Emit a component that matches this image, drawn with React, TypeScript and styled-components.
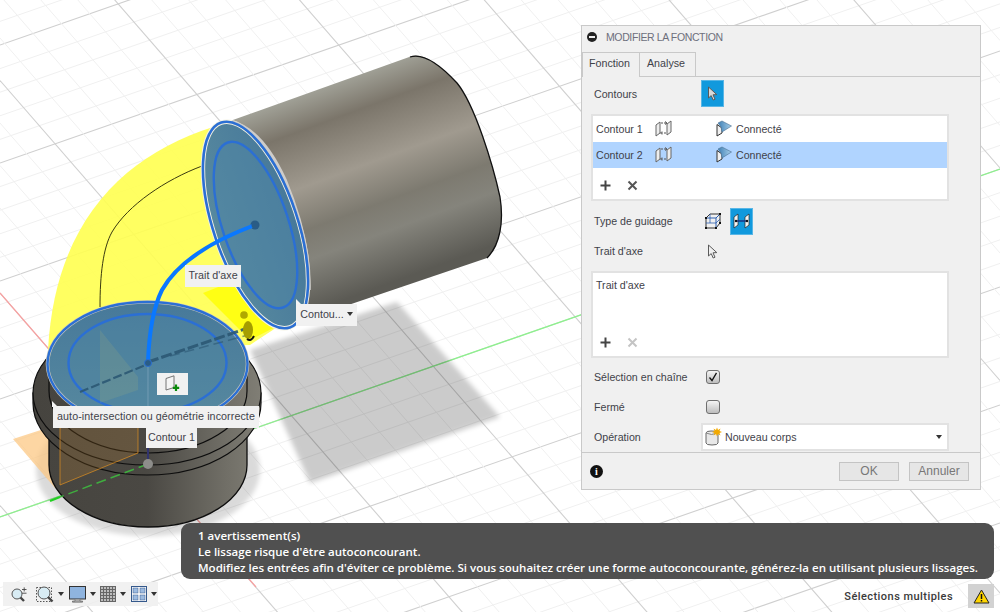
import React from "react";
import styled, { createGlobalStyle } from "styled-components";

const Global = createGlobalStyle`
  html, body { margin: 0; padding: 0; background: #fff; }
  body { font-family: "Liberation Sans", Arial, sans-serif; }
`;

const Page = styled.div`
  position: relative;
  width: 1000px;
  height: 612px;
  overflow: hidden;
  background: #fff;
  color: #3f4249;
  font-size: 11px;
`;

const Scene = styled.svg`
  position: absolute;
  inset: 0;
  display: block;
`;

const Chip = styled.div<{ $x: number; $y: number; $w: number; $h: number; $wide?: boolean }>`
  position: absolute;
  left: ${(p) => p.$x}px;
  top: ${(p) => p.$y}px;
  width: ${(p) => p.$w}px;
  height: ${(p) => p.$h}px;
  box-sizing: border-box;
  padding-bottom: 2px;
  background: #f1f1f1;
  display: flex;
  align-items: center;
  justify-content: center;
  white-space: nowrap;
  font-size: 10.7px;
  letter-spacing: ${(p) => (p.$wide ? "0.09px" : "0")};
  color: #3f4249;
  gap: 3px;
`;

const Pointer = styled.i<{ $x: number; $y: number }>`
  position: absolute;
  left: ${(p) => p.$x}px;
  top: ${(p) => p.$y}px;
  width: 0;
  height: 0;
  border-left: 6px solid #f4f4f4;
  border-top: 6px solid transparent;
`;

const Caret = styled.i<{ $color?: string }>`
  display: inline-block;
  width: 0;
  height: 0;
  border-left: 3px solid transparent;
  border-right: 3px solid transparent;
  border-top: 4px solid ${(p) => p.$color || "#333"};
`;

const Dialog = styled.div`
  position: absolute;
  left: 581px;
  top: 25px;
  width: 400px;
  height: 465px;
  box-sizing: border-box;
  border: 1px solid #c9c9c9;
  background: #f0f0f0;
  display: flex;
  flex-direction: column;
`;

const Header = styled.div`
  height: 26px;
  box-sizing: border-box;
  padding: 0 0 4px 5px;
  display: flex;
  align-items: center;
  gap: 9px;
  color: #6d6f7c;
  font-size: 10.5px;
  letter-spacing: -0.38px;
`;

const CollapseDot = styled.span`
  width: 10px;
  height: 10px;
  border-radius: 50%;
  background: #222;
  position: relative;
  &::after {
    content: "";
    position: absolute;
    left: 2px;
    right: 2px;
    top: 4px;
    height: 2px;
    background: #eee;
  }
`;

const Tabs = styled.div`
  height: 25px;
  display: flex;
  box-sizing: border-box;
  border-bottom: 1px solid #c9c9c9;
`;

const Tab = styled.div<{ $active?: boolean }>`
  box-sizing: border-box;
  height: ${(p) => (p.$active ? 25 : 24)}px;
  width: ${(p) => (p.$active ? 58 : 56)}px;
  padding: 0 3px 4px 0;
  display: flex;
  align-items: center;
  justify-content: center;
  border-top: 1px solid #c9c9c9;
  border-right: 1px solid #c9c9c9;
  border-left: ${(p) => (p.$active ? "1px solid #c9c9c9" : "none")};
  background: #f0f0f0;
  font-size: 10.7px;
  color: #3f4249;
`;

const Body = styled.div`
  flex: 1;
  padding: 3px 31px 0 9px;
  display: flex;
  flex-direction: column;
`;

const Row = styled.div<{ $h?: number; $mt?: number }>`
  height: ${(p) => p.$h ?? 28}px;
  margin-top: ${(p) => p.$mt ?? 0}px;
  display: grid;
  grid-template-columns: 110px 1fr;
  align-items: center;
  flex: none;
`;

const Label = styled.div`
  padding-left: 3px;
  font-size: 10.65px;
  color: #3f4249;
`;

const Controls = styled.div`
  display: flex;
  align-items: center;
  gap: 6px;
`;

const ToolBtn = styled.div<{ $on?: boolean }>`
  width: 23px;
  height: 27px;
  display: flex;
  align-items: center;
  justify-content: center;
  background: ${(p) => (p.$on ? "#1199dd" : "transparent")};
  border: ${(p) => (p.$on ? "1px solid #58b6e6" : "1px solid transparent")};
  box-sizing: border-box;
`;

const ListBox = styled.div<{ $mt: number }>`
  box-sizing: border-box;
  width: 358px;
  height: 87px;
  margin-top: ${(p) => p.$mt}px;
  background: #fff;
  border: 2px solid #e2e2e2;
  display: flex;
  flex-direction: column;
  flex: none;
`;

const ProfileRow = styled.div<{ $sel?: boolean }>`
  height: 26px;
  box-sizing: border-box;
  padding: 0 0 1px 3px;
  flex: none;
  display: grid;
  grid-template-columns: 59px 61px 20px 1fr;
  align-items: center;
  background: ${(p) => (p.$sel ? "#b0d4ff" : "#fff")};
  font-size: 10.65px;
  color: #3f4249;
`;

const ListFill = styled.div`
  flex: 1;
  min-height: 0;
`;

const ListText = styled.div`
  flex: 1;
  padding: 6px 0 0 3px;
  font-size: 10.65px;
  color: #3f4249;
`;

const ListActions = styled.div`
  height: 28px;
  display: flex;
  align-items: center;
  gap: 16px;
  padding-left: 7px;
  flex: none;
`;

const CheckBox = styled.div`
  margin-left: 5px;
  width: 12px;
  height: 12px;
  border: 1px solid #6f6f6f;
  border-radius: 3px;
  background: linear-gradient(#f4f4f4, #bdbdbd);
  display: flex;
  align-items: center;
  justify-content: center;
`;

const Select = styled.div`
  box-sizing: border-box;
  width: 248px;
  height: 28px;
  background: #fff;
  border: 2px solid #e2e2e2;
  display: flex;
  align-items: center;
  padding: 0 5px 0 2px;
  gap: 3px;
  font-size: 10.65px;
  color: #3f4249;
`;

const SelectText = styled.span`
  flex: 1;
`;

const Footer = styled.div`
  height: 36px;
  border-top: 1px solid #c9c9c9;
  display: flex;
  align-items: center;
  padding: 0 11px 0 8px;
  gap: 10px;
  flex: none;
`;

const InfoDot = styled.div`
  width: 13px;
  height: 13px;
  border-radius: 50%;
  background: #111;
  color: #fff;
  font: bold 10px "Liberation Serif", serif;
  display: flex;
  align-items: center;
  justify-content: center;
  margin-right: auto;
`;

const Button = styled.div`
  box-sizing: border-box;
  width: 60px;
  height: 19px;
  background: #e6e6e6;
  border: 1px solid #c4c4c4;
  color: #777;
  font-size: 12px;
  display: flex;
  align-items: center;
  justify-content: center;
`;

const Message = styled.div`
  position: absolute;
  left: 181px;
  top: 523px;
  width: 813px;
  height: 56px;
  box-sizing: border-box;
  background: #505050;
  border-radius: 9px;
  padding: 5px 0 0 17px;
  color: #fff;
  font-family: "Open Sans", sans-serif;
  font-weight: 600;
  font-size: 11.54px;
  line-height: 16px;
  white-space: nowrap;
`;

const Toolbar = styled.div`
  position: absolute;
  left: 3px;
  top: 582px;
  height: 24px;
  width: 155px;
  background: rgba(240, 240, 240, 0.92);
  display: flex;
  align-items: center;
  padding-left: 7px;
  box-sizing: border-box;
`;

const ToolItem = styled.div<{ $w: number }>`
  width: ${(p) => p.$w}px;
  display: flex;
  align-items: center;
  gap: 4px;
  flex: none;
`;

const Status = styled.div`
  position: absolute;
  right: 6px;
  top: 584px;
  height: 24px;
  display: flex;
  align-items: center;
  gap: 15px;
  font-family: Roboto, sans-serif;
  font-weight: 500;
  font-size: 11px;
  color: #3a3a3a;
  letter-spacing: 0.45px;
`;

const WarnChip = styled.div`
  width: 26px;
  height: 24px;
  background: #d2d2d2;
  display: flex;
  align-items: center;
  justify-content: center;
`;

const A_SLOPE = -0.348;
const B_SLOPE = 1.15;
const GridLines = () => {
  const lines: React.ReactElement[] = [];
  for (let i = -10; i < 60; i++) {
    const c = 45 + i * 23.6;
    const major = i % 5 === 0;
    lines.push(
      <line key={"a" + i} x1={0} y1={c} x2={1000} y2={c + A_SLOPE * 1000} stroke={major ? "#cfcfcf" : "#f0f0f0"} strokeWidth={major ? 1.1 : 1} />
    );
  }
  for (let i = -60; i < 15; i++) {
    const c = 293 + i * 42.5;
    const major = i % 5 === 0;
    lines.push(
      <line key={"b" + i} x1={0} y1={c} x2={1000} y2={c + B_SLOPE * 1000} stroke={major ? "#cfcfcf" : "#f0f0f0"} strokeWidth={major ? 1.1 : 1} />
    );
  }
  return <g>{lines}</g>;
};

const Model = () => (
  <Scene width={1000} height={612} viewBox="0 0 1000 612">
    <defs>
      <linearGradient id="cyl" gradientUnits="userSpaceOnUse" x1="322" y1="88" x2="393" y2="282">
        <stop offset="0" stopColor="#a0a096" />
        <stop offset="0.16" stopColor="#7b756a" />
        <stop offset="0.42" stopColor="#a09a8f" />
        <stop offset="0.62" stopColor="#7d7a70" />
        <stop offset="0.76" stopColor="#85847c" />
        <stop offset="1" stopColor="#5b5a54" />
      </linearGradient>
      <linearGradient id="base" gradientUnits="userSpaceOnUse" x1="33" y1="0" x2="261" y2="0">
        <stop offset="0" stopColor="#46443f" />
        <stop offset="0.5" stopColor="#4a4843" />
        <stop offset="0.85" stopColor="#716f67" />
        <stop offset="1" stopColor="#807e75" />
      </linearGradient>
      <linearGradient id="disk" x1="0" y1="0" x2="0" y2="1">
        <stop offset="0" stopColor="#47799a" />
        <stop offset="1" stopColor="#57899f" />
      </linearGradient>
      <filter id="soft" x="-10%" y="-10%" width="120%" height="120%">
        <feGaussianBlur stdDeviation="2.5" />
      </filter>
    </defs>

    <GridLines />
    <line x1="0" y1="517" x2="1000" y2="169" stroke="#8ef08e" strokeWidth="1.3" />
    <line x1="0" y1="293" x2="256" y2="587" stroke="#f7a0a0" strokeWidth="1.2" />

    <polygon points="397,302 500,417 310,483 250,350" fill="#000" opacity="0.2" filter="url(#soft)" />

    <path d="M213,127 C125,155 55,220 48,350 L250,345 L285,322 L240,190 Z" fill="#ffff50" fillOpacity="0.9" />
    <path d="M203,293 L250,340 L285,322 L262,270 Z" fill="#ffff14" />
    <path d="M202,166 C165,180 128,205 112,232 C103,248 100,275 100,307" fill="none" stroke="#3a3a10" strokeWidth="1" />

    <path d="M230,121 L412,56 C425,52 445,70 457,83 C475,105 493,165 500,197 C504,222 500,245 487,258 L310,318 Z" fill="url(#cyl)" />
    <path d="M410,57 C425,52 445,70 457,83 C475,105 493,165 500,197 C504,222 500,245 487,258" fill="none" stroke="#111" strokeWidth="1.3" />

    <ellipse cx="255.5" cy="225" rx="108" ry="42" transform="rotate(71.5 255.5 225)" fill="url(#disk)" stroke="#f4f2e2" strokeWidth="4.4" />
    <path d="M232,122 Q262,130 285,180 Q310,240 309,290" fill="none" stroke="#cfcdca" strokeWidth="3.5" />
    <ellipse cx="255.5" cy="225" rx="108" ry="42" transform="rotate(71.5 255.5 225)" fill="none" stroke="#2b6fd4" strokeWidth="2.6" />
    <ellipse cx="255.5" cy="225" rx="87" ry="33" transform="rotate(71.5 255.5 225)" fill="#4f86a3" fillOpacity="0.5" stroke="#2b6fd4" strokeWidth="2.4" />
    <circle cx="255" cy="225" r="4.5" fill="#2a5c86" />

    <ellipse cx="148" cy="470" rx="112" ry="66" fill="#000" opacity="0.14" filter="url(#soft)" />

    <polygon points="13,439 47,428 130,462 55,488" fill="#fcc884" opacity="0.75" />

    <path d="M49,420 V465 A99,62 0 0 0 247,465 V420 Z" fill="url(#base)" stroke="#0d0d0d" strokeWidth="1.3" />
    <path d="M33,393 V403 A114,72 0 0 0 261,403 V393 Z" fill="url(#base)" stroke="#0d0d0d" strokeWidth="1.2" />
    <ellipse cx="147" cy="393" rx="114" ry="72" fill="url(#base)" stroke="#0d0d0d" strokeWidth="1.2" />
    <path d="M49,364 V391 A99,62 0 0 0 247,391 V364 Z" fill="url(#base)" stroke="#0d0d0d" strokeWidth="1.2" />

    <polygon points="60,428 138,390 138,453 60,485" fill="#f0a030" fillOpacity="0.16" stroke="#e09020" strokeOpacity="0.7" strokeWidth="1" />
    <line x1="148" y1="364" x2="148" y2="462" stroke="#31346e" strokeWidth="2" />
    <line x1="148" y1="464" x2="60" y2="497" stroke="#3fae3f" strokeWidth="1.5" strokeDasharray="10 5" />
    <line x1="60" y1="497" x2="50" y2="501" stroke="#22d022" strokeWidth="2" />
    <circle cx="148" cy="464" r="5" fill="#8d8d8a" />

    <ellipse cx="147.5" cy="364" rx="100" ry="62" fill="url(#disk)" stroke="#c9c7ba" strokeWidth="3.6" />
    <ellipse cx="147.5" cy="364" rx="100" ry="62" fill="none" stroke="#2b6fd4" strokeWidth="2.4" />
    <ellipse cx="147.5" cy="363" rx="79" ry="49" fill="#4f86a3" fillOpacity="0.4" stroke="#2b6fd4" strokeWidth="2.4" />
    <polygon points="100,330 138,377 138,390 100,403" fill="#c0c070" opacity="0.14" />
    <line x1="148" y1="364" x2="148" y2="408" stroke="#6f9ab2" strokeWidth="1.4" opacity="0.8" />
    <line x1="80" y1="392" x2="148" y2="364" stroke="#2c5874" strokeWidth="2.2" strokeDasharray="9 3" opacity="0.9" />
    <line x1="148" y1="362" x2="248" y2="328" stroke="#2c5874" strokeWidth="3" strokeDasharray="11 3" opacity="0.9" />
    <line x1="170" y1="356" x2="248" y2="335" stroke="#2c5874" strokeWidth="1.6" strokeDasharray="10 5" opacity="0.6" />

    <circle cx="244" cy="315" r="3.8" fill="#b0a800" />
    <ellipse cx="248" cy="330" rx="5" ry="9" fill="#a59d00" />
    <path d="M247,339 Q251,342 254,336" fill="none" stroke="#111" strokeWidth="2" />

    <path d="M255,225 C220,238 180,258 162,290 C152,310 149,335 148,362" fill="none" stroke="#0a78ff" strokeWidth="4" />
    <circle cx="255" cy="225" r="3.5" fill="#2a5c86" />
    <circle cx="148" cy="363" r="3.5" fill="#2a5c86" stroke="#2b6fd4" />
  </Scene>
);

const ArrowCursor = ({ fill = "#fff", stroke = "#555" }: { fill?: string; stroke?: string }) => (
  <svg width="11" height="15" viewBox="0 0 11 15">
    <path d="M1.5,1 L1.5,12 L4.2,9.6 L6.2,14 L8,13.2 L6,8.8 L9.8,8.6 Z" fill={fill} stroke={stroke} strokeWidth="1" strokeLinejoin="round" />
  </svg>
);

const ProfileIcon = () => (
  <svg width="17" height="17" viewBox="0 0 17 17">
    <path d="M1,5 L5,2 V13 L1,16 Z" fill="#eee" stroke="#666" />
    <path d="M12,4 L16,1 V12 L12,15 Z" fill="#eee" stroke="#666" />
    <path d="M6,3 H11 M6,13 H11" stroke="#555" strokeWidth="1" strokeDasharray="2 1" />
    <path d="M10,1.5 L12,3 L10,4.5" fill="none" stroke="#555" />
    <path d="M7,11.5 L5.5,13 L7,14.5" fill="none" stroke="#555" />
  </svg>
);

const ConnectedIcon = () => (
  <svg width="16" height="17" viewBox="0 0 16 17">
    <defs>
      <linearGradient id="cn" x1="0" y1="0" x2="1" y2="0">
        <stop offset="0" stopColor="#3f7fb4" />
        <stop offset="1" stopColor="#a8d0ea" />
      </linearGradient>
    </defs>
    <path d="M1,4.5 V16 L6,13 V8 Z" fill="#f0f0f0" stroke="#333" strokeWidth="1" />
    <path d="M2,3 L6,1 L15.5,6 L6,12 L5,7 Z" fill="url(#cn)" stroke="#4a6f90" strokeWidth="0.6" />
  </svg>
);

const Plus = ({ color = "#444" }: { color?: string }) => (
  <svg width="11" height="11" viewBox="0 0 11 11">
    <path d="M5.5,0.5 V10.5 M0.5,5.5 H10.5" stroke={color} strokeWidth="2" />
  </svg>
);

const Cross = ({ color = "#555" }: { color?: string }) => (
  <svg width="11" height="11" viewBox="0 0 11 11">
    <path d="M1.5,1.5 L9.5,9.5 M9.5,1.5 L1.5,9.5" stroke={color} strokeWidth="2" />
  </svg>
);

const GuideBox = () => (
  <svg width="18" height="18" viewBox="0 0 18 18">
    <path d="M2,6 L6,2 H16 V11 L12,16 H2 Z" fill="none" stroke="#333" strokeWidth="1" />
    <path d="M2,6 H12 V16 M12,6 L16,2" fill="none" stroke="#2d5fb0" strokeWidth="1" />
    <path d="M2,11 H12 L16,7 M6,2 V11" fill="none" stroke="#2d5fb0" strokeWidth="0.8" />
    <path d="M1,5 h2 v2 h-2 Z M15,1 h2 v2 h-2 Z M1,15 h2 v2 h-2 Z M11,15 h2 v2 h-2 Z M15,10 h2 v2 h-2 Z" fill="#111" />
  </svg>
);

const GuidePlanes = () => (
  <svg width="17" height="16" viewBox="0 0 17 16">
    <path d="M1,4 L5,1 V12 L1,15 Z" fill="#f4f4f4" stroke="#222" strokeWidth="0.7" />
    <path d="M12,4 L16,1 V12 L12,15 Z" fill="#f4f4f4" stroke="#222" strokeWidth="0.7" />
    <path d="M3,8 H14" stroke="#1c2f80" strokeWidth="1.4" />
    <circle cx="3" cy="8" r="1.2" fill="#111" />
    <circle cx="14" cy="8" r="1.2" fill="#111" />
  </svg>
);

const Check = () => (
  <svg width="10" height="10" viewBox="0 0 10 10">
    <path d="M1.5,5.5 L4,8.5 L8.5,0.8" fill="none" stroke="#111" strokeWidth="1.3" />
  </svg>
);

const NewBody = () => (
  <svg width="17" height="20" viewBox="0 0 17 20">
    <path d="M1,6 Q1,4 6,4 Q13,4 13,6 V16 Q13,18 7,18 Q1,18 1,16 Z" fill="#e8e8e8" stroke="#666" />
    <path d="M1,6 Q6,9 13,6" fill="none" stroke="#888" />
    <path d="M12,0.5 L13,3 L15.5,1.5 L14.5,4 L17,5 L14.5,6 L15.5,8.5 L13,7 L12,9.5 L11,7 L8.5,8.5 L9.5,6 L7,5 L9.5,4 L8.5,1.5 L11,3 Z" fill="#f2a900" />
  </svg>
);

const SketchAdd = () => (
  <svg width="15" height="17" viewBox="0 0 15 17">
    <path d="M1,3.5 L9,0.8 V12.5 L1,15 Z" fill="#f4f4f4" stroke="#666" strokeWidth="0.9" />
    <path d="M11,9.5 V16 M7.8,12.8 H14.2" stroke="#0a8a0a" strokeWidth="2.2" />
  </svg>
);

const ZoomFit = () => (
  <svg width="17" height="17" viewBox="0 0 17 17">
    <circle cx="7" cy="8" r="5" fill="#d8ecf4" stroke="#555" />
    <path d="M10.5,11.5 L14,15" stroke="#444" strokeWidth="2.4" />
    <path d="M12,3.5 H16.5 M14.2,1.4 V5.5 M12,7.2 H16.5" stroke="#444" strokeWidth="0.9" />
  </svg>
);

const ZoomWindow = () => (
  <svg width="18" height="18" viewBox="0 0 18 18">
    <rect x="0.5" y="2.5" width="15" height="14" fill="none" stroke="#555" strokeDasharray="1.5 1.5" />
    <circle cx="8" cy="8" r="6" fill="#d8ecf4" stroke="#555" />
    <path d="M12,12 L16.5,16.5" stroke="#444" strokeWidth="2.4" />
  </svg>
);

const Display = () => (
  <svg width="17" height="18" viewBox="0 0 17 18">
    <rect x="0.5" y="1.5" width="16" height="12.5" fill="#8fb4df" stroke="#333" />
    <path d="M6,14.5 V16 H3.5 V17.2 H13.5 V16 H11 V14.5" fill="#aaa" stroke="#555" strokeWidth="0.6" />
  </svg>
);

const GridTool = () => (
  <svg width="16" height="16" viewBox="0 0 16 16">
    <rect width="16" height="16" fill="#bdbdbd" />
    <path d="M0.5,0 V16 M3.5,0 V16 M6.5,0 V16 M9.5,0 V16 M12.5,0 V16 M15.5,0 V16 M0,0.5 H16 M0,3.5 H16 M0,6.5 H16 M0,9.5 H16 M0,12.5 H16 M0,15.5 H16" stroke="#666" strokeWidth="1" />
  </svg>
);

const Views = () => (
  <svg width="16" height="16" viewBox="0 0 16 16">
    <rect x="0.5" y="0.5" width="15" height="15" fill="#fff" stroke="#35598c" />
    <rect x="2" y="2" width="5" height="5" fill="#9dbbe0" stroke="#35598c" strokeWidth="0.5" />
    <rect x="9" y="2" width="5" height="5" fill="#9dbbe0" stroke="#35598c" strokeWidth="0.5" />
    <rect x="2" y="9" width="5" height="5" fill="#9dbbe0" stroke="#35598c" strokeWidth="0.5" />
    <rect x="9" y="9" width="5" height="5" fill="#9dbbe0" stroke="#35598c" strokeWidth="0.5" />
  </svg>
);

const Warn = () => (
  <svg width="17" height="15" viewBox="0 0 17 15">
    <path d="M8.5,1 L16,14 H1 Z" fill="#ffd500" stroke="#222" strokeWidth="1" strokeLinejoin="round" />
    <path d="M8.5,5 V10 M8.5,11 V12.6" stroke="#111" strokeWidth="1.5" />
  </svg>
);

export default function App() {
  return (
    <Page>
      <Global />
      <Model />

      <Chip $x={185} $y={265} $w={56} $h={22}>Trait d'axe</Chip>
      <Pointer $x={296} $y={299} />
      <Chip $x={296} $y={304} $w={61} $h={22}>Contou... <Caret /></Chip>
      <Chip $x={157} $y={373} $w={31} $h={22}><SketchAdd /></Chip>
      <Pointer $x={52} $y={401} />
      <Chip $x={53} $y={406} $w={206} $h={22} $wide>auto-intersection ou géométrie incorrecte</Chip>
      <Chip $x={146} $y={428} $w={51} $h={20}>Contour 1</Chip>

      <Dialog>
        <Header>
          <CollapseDot />
          MODIFIER LA FONCTION
        </Header>
        <Tabs>
          <Tab $active>Fonction</Tab>
          <Tab>Analyse</Tab>
        </Tabs>
        <Body>
          <Row $h={27}>
            <Label>Contours</Label>
            <Controls>
              <ToolBtn $on><ArrowCursor fill="#d8d8d8" stroke="#5a5a5a" /></ToolBtn>
            </Controls>
          </Row>
          <ListBox $mt={7}>
            <ProfileRow>
              <span>Contour 1</span>
              <ProfileIcon />
              <ConnectedIcon />
              <span>Connecté</span>
            </ProfileRow>
            <ProfileRow $sel>
              <span>Contour 2</span>
              <ProfileIcon />
              <ConnectedIcon />
              <span>Connecté</span>
            </ProfileRow>
            <ListFill />
            <ListActions>
              <Plus />
              <Cross />
            </ListActions>
          </ListBox>
          <Row $mt={6}>
            <Label>Type de guidage</Label>
            <Controls>
              <ToolBtn><GuideBox /></ToolBtn>
              <ToolBtn $on><GuidePlanes /></ToolBtn>
            </Controls>
          </Row>
          <Row $mt={2}>
            <Label>Trait d'axe</Label>
            <Controls>
              <ToolBtn><ArrowCursor fill="#f0f0f0" stroke="#5a5a5a" /></ToolBtn>
            </Controls>
          </Row>
          <ListBox $mt={6}>
            <ListText>Trait d'axe</ListText>
            <ListActions>
              <Plus />
              <Cross color="#c4c4c4" />
            </ListActions>
          </ListBox>
          <Row $mt={5}>
            <Label>Sélection en chaîne</Label>
            <Controls><CheckBox><Check /></CheckBox></Controls>
          </Row>
          <Row $mt={2}>
            <Label>Fermé</Label>
            <Controls><CheckBox /></Controls>
          </Row>
          <Row $mt={2}>
            <Label>Opération</Label>
            <Select>
              <NewBody />
              <SelectText>Nouveau corps</SelectText>
              <Caret />
            </Select>
          </Row>
        </Body>
        <Footer>
          <InfoDot>i</InfoDot>
          <Button>OK</Button>
          <Button>Annuler</Button>
        </Footer>
      </Dialog>

      <Message>
        <div>1 avertissement(s)</div>
        <div>Le lissage risque d'être autoconcourant.</div>
        <div>Modifiez les entrées afin d'éviter ce problème. Si vous souhaitez créer une forme autoconcourante, générez-la en utilisant plusieurs lissages.</div>
      </Message>

      <Toolbar>
        <ToolItem $w={26}><ZoomFit /></ToolItem>
        <ToolItem $w={33}><ZoomWindow /><Caret /></ToolItem>
        <ToolItem $w={31}><Display /><Caret /></ToolItem>
        <ToolItem $w={31}><GridTool /><Caret /></ToolItem>
        <ToolItem $w={28}><Views /><Caret /></ToolItem>
      </Toolbar>

      <Status>
        Sélections multiples
        <WarnChip><Warn /></WarnChip>
      </Status>
    </Page>
  );
}
